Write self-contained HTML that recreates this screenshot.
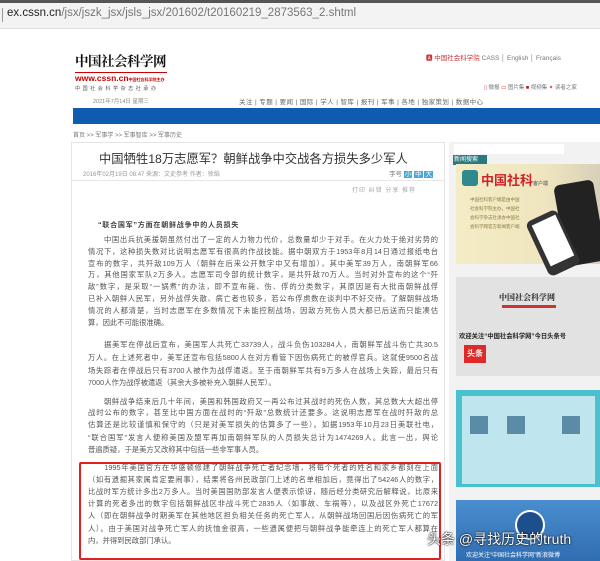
<!DOCTYPE html>
<html><head><meta charset="utf-8"><style>
*{margin:0;padding:0;box-sizing:border-box}
body{width:600px;height:561px;overflow:hidden;background:#fff;position:relative;font-family:"Liberation Sans","Noto Sans CJK SC",sans-serif;color:#333}
.a{position:absolute;white-space:nowrap}
.ln{position:absolute;left:88px;width:350px;font-size:7.3px;color:#555;height:12px;line-height:12px;overflow:hidden;text-align:justify;text-align-last:justify;white-space:nowrap}
.l{text-align-last:left}
</style></head><body>
<div class="a" style="left:0;top:0;width:600px;height:3px;background:#555"></div>
<div class="a" style="left:0;top:3px;width:600px;height:26px;background:#f3f3f3;border-bottom:1px solid #ddd"></div>
<div class="a" style="left:2px;top:8px;width:1px;height:14px;background:#999"></div>
<div class="a" style="left:7px;top:7px;font-size:11.5px;color:#777"><span style="color:#222">ex.cssn.cn</span>/jsx/jszk_jsx/jsls_jsx/201602/t20160219_2873563_2.shtml</div>

<div class="a" style="left:75px;top:50px;font-size:13.5px;font-family:'Noto Serif CJK SC',serif;color:#111;font-weight:bold;letter-spacing:-0.5px">中国社会科学网</div>
<div class="a" style="left:75px;top:72px;width:92px;height:1px;background:#c00"></div>
<div class="a" style="left:75px;top:73px;font-size:8.5px;color:#c00;font-weight:bold">www.cssn.cn<span style="font-size:4px">中国社会科学院主办</span></div>
<div class="a" style="left:75px;top:85px;font-size:5px;color:#555;letter-spacing:2.6px">中国社会科学杂志社承办</div>
<div class="a" style="left:93px;top:97px;font-size:5.5px;color:#888">2021年7月14日 星期三</div>

<div class="a" style="left:426px;top:52px;font-size:6.5px;color:#777"><span style="color:#c33">🅰 中国社会科学院</span> CASS │ English │ Français</div>
<div class="a" style="left:484px;top:83px;font-size:5.5px;color:#777"><span style="color:#c33">▯</span> 微报 <span style="color:#c33">▭</span> 图片集 <span style="color:#a22">■</span> 视频集 <span style="color:#c33">✦</span> 读者之家</div>
<div class="a" style="left:239px;top:96px;font-size:6.5px;color:#666;letter-spacing:.4px">关注 | 专题 | 要闻 | 国际 | 学人 | 智库 | 报刊 | 军事 | 各地 | 独家策划 | 数据中心</div>
<div class="a" style="left:73px;top:108px;width:527px;height:16px;background:#0f5bb0"></div>
<div class="a" style="left:73px;top:130px;font-size:6px;color:#777">首页 &gt;&gt; 军事学 &gt;&gt; 军事智库 &gt;&gt; 军事历史</div>

<div class="a" style="left:71px;top:142px;width:374px;height:419px;border:1px solid #e4e4e4"></div>
<div class="a" style="left:71px;top:180px;width:374px;height:1px;background:#e6e6e6"></div>
<div class="a" style="left:99px;top:149px;font-size:12.3px;color:#333">中国牺牲18万志愿军？朝鲜战争中交战各方损失多少军人</div>
<div class="a" style="left:83px;top:169px;font-size:6px;color:#999">2016年02月19日 08:47 来源：文史参考 作者：徐焰</div>
<div class="a" style="left:389px;top:168px;font-size:6.5px;color:#777">字号 <span style="background:#4aa8d8;color:#fff;padding:0 1px">小</span> <span style="background:#4aa8d8;color:#fff;padding:0 1px">中</span> <span style="background:#4aa8d8;color:#fff;padding:0 1px">大</span></div>
<div class="a" style="left:352px;top:185px;font-size:6px;color:#aaa;letter-spacing:1px">打印 纠错 分享 推荐</div>

<div class="a" style="left:98px;top:220px;font-size:7px;color:#444;font-weight:bold;letter-spacing:.8px">“联合国军”方面在朝鲜战争中的人员损失</div>
<div class="ln" style="top:234px">　　中国出兵抗美援朝虽然付出了一定的人力物力代价，总数量却少于对手。在火力处于绝对劣势的</div>
<div class="ln" style="top:246px">情况下，这种损失数对比说明志愿军有很高的作战技能。据中朝双方于1953年8月14日通过报纸电台</div>
<div class="ln" style="top:258px">宣布的数字，共歼敌109万人（朝鲜在后来公开数字中又有增加），其中美军39万人，南朝鲜军66</div>
<div class="ln" style="top:269px">万，其他国家军队2万多人。志愿军司令部的统计数字，是共歼敌70万人。当时对外宣布的这个“歼</div>
<div class="ln" style="top:281px">敌”数字，是采取“一锅煮”的办法，即不宣布毙、伤、俘的分类数字，其原因是有大批南朝鲜战俘</div>
<div class="ln" style="top:293px">已补入朝鲜人民军，另外战俘失散、病亡者也较多，若公布俘虏数在谈判中不好交待。了解朝鲜战场</div>
<div class="ln" style="top:305px">情况的人都清楚，当时志愿军在多数情况下未能控制战场，因敌方死伤人员大都已后送而只能凑估</div>
<div class="ln l" style="top:317px">算，因此不可能很准确。</div>

<div class="ln" style="top:339px">　　据美军在停战后宣布，美国军人共死亡33739人，战斗负伤103284人，南朝鲜军战斗伤亡共30.5</div>
<div class="ln" style="top:352px">万人。在上述死者中，美军还宣布包括5800人在对方看管下因伤病死亡的被俘官兵。这就使9500名战</div>
<div class="ln" style="top:365px">场失踪者在停战后只有3700人被作为战俘遣返。至于南朝鲜军共有9万多人在战场上失踪，最后只有</div>
<div class="ln l" style="top:377px">7000人作为战俘被遣返（其余大多被补充入朝鲜人民军）。</div>

<div class="ln" style="top:396px">　　朝鲜战争结束后几十年间，美国和韩国政府又一再公布过其战时的死伤人数，其总数大大超出停</div>
<div class="ln" style="top:407px">战时公布的数字，甚至比中国方面在战时的“歼敌”总数统计还要多。这说明志愿军在战时歼敌的总</div>
<div class="ln" style="top:419px">估算还是比较谨慎和保守的（只是对美军损失的估算多了一些）。如据1953年10月23日美联社电，</div>
<div class="ln" style="top:432px">“联合国军”发言人便称美国及盟军再加南朝鲜军队的人员损失总计为1474269人。此言一出，舆论</div>
<div class="ln l" style="top:444px">普遍质疑，于是美方又改称其中包括一些非军事人员。</div>

<div class="a" style="left:79px;top:462px;width:362px;height:98px;border:2px solid #e02020;border-radius:2px"></div>
<div class="ln" style="top:462px">　　1995年美国官方在华盛顿修建了朝鲜战争死亡者纪念墙，将每个死者的姓名和家乡都刻在上面</div>
<div class="ln" style="top:474px">（如有遗掘其家属肯定要闹事），结果将各州民政部门上述的名单相加后，竟得出了54246人的数字，</div>
<div class="ln" style="top:486px">比战时军方统计多出2万多人。当时美国国防部发言人便表示惊讶，随后经分类研究后解释说，比原来</div>
<div class="ln" style="top:498px">计算的死者多出的数字包括朝鲜战区非战斗死亡2835人（如事故、车祸等），以及战区外死亡17672</div>
<div class="ln" style="top:510px">人（即在朝鲜战争时期美军在其他地区担负相关任务的死亡军人，从朝鲜战场回国后因伤病死亡的军</div>
<div class="ln" style="top:523px">人）。由于美国对战争死亡军人的抚恤金很高，一些遗属便把与朝鲜战争能牵连上的死亡军人都算在</div>
<div class="ln l" style="top:535px">内，并得到民政部门承认。</div>

<div class="a" style="left:449px;top:142px;width:151px;height:419px;background:#f2f2f2"></div>
<div class="a" style="left:454px;top:144px;width:110px;height:10px;background:#fff"></div>
<div class="a" style="left:453px;top:155px;width:34px;height:10px;background:#2a7a80;color:#fff;font-size:6px;line-height:10px;padding-left:1px">新闻搜索</div>
<div class="a" style="left:456px;top:164px;width:144px;height:100px;background:linear-gradient(90deg,#f4ecc4,#efe6c0 60%,#d8d0b8)"></div>
<div class="a" style="left:462px;top:170px;width:16px;height:16px;background:#2e8a8c;border-radius:3px"></div>
<div class="a" style="left:481px;top:170px;font-size:13px;font-weight:bold;color:#d0202a">中国社科<span style="font-size:5px;color:#777">客户端</span></div>
<div class="a" style="left:470px;top:195px;font-size:4.5px;color:#8a7a40;line-height:9px;white-space:normal;width:50px">中国社科客户端是由中国社会科学院主办，中国社会科学杂志社承办中国社会科学网官方新闻客户端</div>
<div class="a" style="left:560px;top:182px;width:40px;height:82px;background:#222;border-radius:6px;transform:rotate(-10deg)"></div>
<div class="a" style="left:536px;top:213px;width:34px;height:60px;background:#333;border-radius:6px;transform:rotate(-25deg)"></div>
<div class="a" style="left:540px;top:218px;width:26px;height:45px;background:#fff;transform:rotate(-25deg)"></div>
<div class="a" style="left:456px;top:277px;width:144px;height:99px;background:#e2e2e2"></div>
<div class="a" style="left:499px;top:292px;font-size:8px;font-family:'Noto Serif CJK SC',serif;color:#222;font-weight:bold">中国社会科学网</div>
<div class="a" style="left:502px;top:305px;width:54px;height:3px;background:#c33"></div>
<div class="a" style="left:459px;top:331px;font-size:6.3px;color:#222;font-weight:bold">欢迎关注“中国社会科学网”今日头条号</div>
<div class="a" style="left:464px;top:345px;width:22px;height:18px;background:#e02a2a;color:#fff;font-size:8px;font-weight:bold;line-height:18px;text-align:center">头条</div>
<div class="a" style="left:456px;top:390px;width:144px;height:97px;background:#4bc0cf"></div>
<div class="a" style="left:462px;top:396px;width:133px;height:88px;background:#bfe6ee"></div>
<div class="a" style="left:470px;top:416px;width:18px;height:18px;background:#5a8ca8"></div>
<div class="a" style="left:507px;top:416px;width:18px;height:18px;background:#5a8ca8"></div>
<div class="a" style="left:562px;top:416px;width:18px;height:18px;background:#5a8ca8"></div>
<div class="a" style="left:456px;top:500px;width:144px;height:61px;background:linear-gradient(#4a8ecf,#2f6db0)"></div>
<div class="a" style="left:515px;top:510px;width:30px;height:30px;border-radius:50%;background:#1d4f8f;border:2px solid #fff"></div>
<div class="a" style="left:466px;top:550px;font-size:6px;color:#fff">欢迎关注“中国社会科学网”新浪微博</div>
<div class="a" style="left:427px;top:529px;font-size:14px;color:#fff;text-shadow:0 0 2px #000,0 0 1px #000">头条 @寻找历史的truth</div>
</body></html>
